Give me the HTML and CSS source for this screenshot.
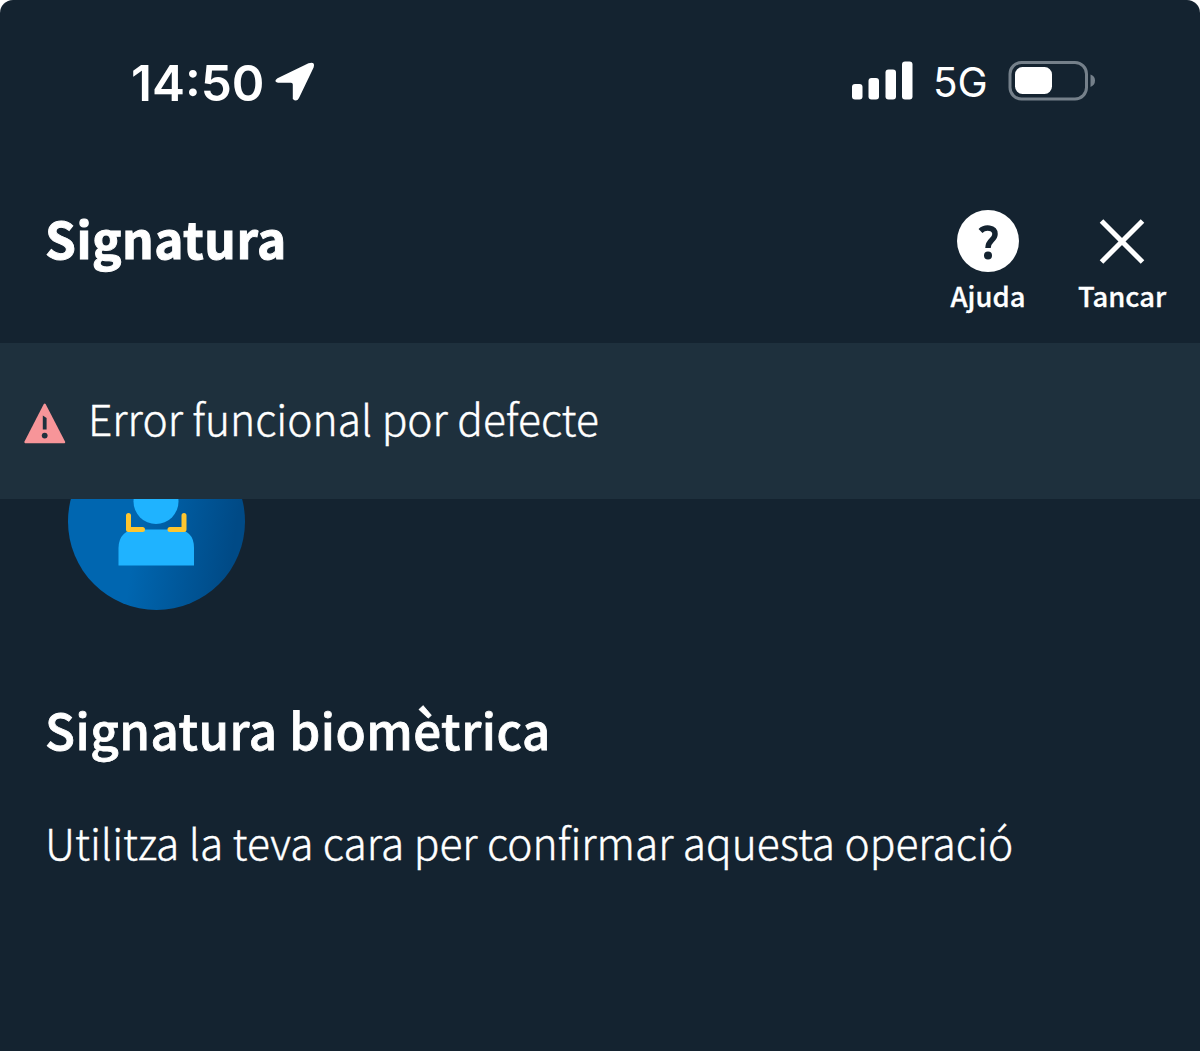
FILE: index.html
```html
<!DOCTYPE html>
<html lang="ca">
<head>
    <meta charset="UTF-8">
    <meta name="viewport" content="width=device-width, initial-scale=1.0">
    <title>Signatura</title>
    <link rel="stylesheet" href="styles.css">
</head>
<body>

    <div class="screen">
        <div class="status-bar">
            <div class="clock">
                <span class="time">14:50</span>
                <svg class="location" width="40" height="40" viewBox="0 0 40 40">
                    <path d="M2.500 17.200 33.500 2.200Q40.500 0 38.600 6.500L24 37Q21.500 41.500 17.800 38V23.500Q17.800 21.700 16 21.700H3Q-2 20.700 2.500 17.200Z" fill="#fff"/>
                </svg>
            </div>
            <div class="indicators">
                <svg class="signal" width="62" height="40" viewBox="0 0 62 40" fill="#fff">
                    <rect x="1" y="23" width="10.500" height="15.500" rx="3"/>
                    <rect x="17.500" y="17" width="10.500" height="21.500" rx="3"/>
                    <rect x="34.500" y="8.500" width="10.500" height="30" rx="3"/>
                    <rect x="51" y="0.500" width="10.500" height="38" rx="3"/>
                </svg>
                <span class="network">5G</span>
                <svg class="battery" width="88" height="40" viewBox="0 0 88 40">
                    <rect x="2" y="1.500" width="76.500" height="36.500" rx="11.500" fill="none" stroke="#75808a" stroke-width="3"/>
                    <rect x="7" y="6" width="37" height="27" rx="7.500" fill="#fff"/>
                    <path d="M82.500 13.500Q87 15 87 19.500T82.500 26Z" fill="#75808a"/>
                </svg>
            </div>
        </div>

        <header class="header">
            <h1>Signatura</h1>
            <div class="actions">
                <div class="action">
                    <svg width="62" height="62" viewBox="0 0 62 62">
                        <circle cx="31" cy="31" r="31" fill="#fff"/>
                        <path d="M23.500 21C28 16.500 38 17 38 24C38 30.500 31 29.500 31 38" fill="none" stroke="#142330" stroke-width="5.500"/>
                        <circle cx="31" cy="45.500" r="4" fill="#142330"/>
                    </svg>
                    <span class="label">Ajuda</span>
                </div>
                <div class="action">
                    <svg width="62" height="62" viewBox="0 0 62 62">
                        <path d="M10.500 11 51.500 52M51.500 11 10.500 52" stroke="#fff" stroke-width="5"/>
                    </svg>
                    <span class="label">Tancar</span>
                </div>
            </div>
        </header>

        <div class="alert">
            <svg class="warning" width="42" height="41" viewBox="0 0 42 41">
                <path d="M19.800 1Q20.700 0 21.600 1L41 38.500Q41.600 40 40.500 40.200H1.200Q0 40 .5 38.500Z" fill="#f79599"/>
                <path d="M18.800 12.500 22.600 15V26.500H18.800Z" fill="#1e303d"/>
                <circle cx="20.700" cy="32.600" r="2.900" fill="#1e303d"/>
            </svg>
            <span class="alert-text">Error funcional por defecte</span>
        </div>

        <main class="content">
            <svg class="face" width="178" height="111" viewBox="0 66 178 111">
                <defs>
                    <linearGradient id="badge" x1="0" y1="0.400" x2="1" y2="0.550">
                        <stop offset="0.400" stop-color="#0066b0"/>
                        <stop offset="0.950" stop-color="#004a86"/>
                    </linearGradient>
                </defs>
                <circle cx="88.500" cy="88.500" r="88.500" fill="url(#badge)"/>
                <circle cx="88" cy="68.500" r="22.500" fill="#1fb3ff"/>
                <path d="M50.500 132.500V115Q51 96.500 70 96.500H107Q126 96.500 126 115V132.500Z" fill="#1fb3ff"/>
                <path d="M60.500 82.500V96.500H74.500M116 82.500V96.500H102" fill="none" stroke="#fdc62f" stroke-width="5" stroke-linecap="round" stroke-linejoin="round"/>
            </svg>
            <h2>Signatura biomètrica</h2>
            <p>Utilitza la teva cara per confirmar aquesta operació</p>
        </main>
    </div>

</body>
</html>
```
FILE: styles.css
```css
body {
    margin: 0;
    background-color: #fff;
    color: #fff;
    font-family: "Noto Sans CJK JP", "Open Sans", sans-serif;
}
.screen {
    height: 1051px;
    background-color: #142330;
    border-radius: 13px 13px 0 0;
    overflow: hidden;
    white-space: nowrap;
}
.status-bar {
    display: flex;
    justify-content: space-between;
    box-sizing: border-box;
    height: 163px;
    padding: 61px 104px 0 131px;
    font-family: Inter, sans-serif;
}
.clock,
.indicators {
    display: flex;
    align-items: center;
    height: 40px;
}
.time {
    width: 144px;
    padding-top: 3px;
    font-size: 49.5px;
    font-weight: 600;
    line-height: 40px;
}
.network {
    width: 75px;
    margin-left: 20px;
    padding-top: 4px;
    font-size: 40.5px;
    line-height: 40px;
}
.header {
    display: flex;
    justify-content: space-between;
    box-sizing: border-box;
    height: 180px;
    padding: 47px 34px 0 45px;
}
h1,
h2,
p {
    margin: 0;
}
h1 {
    font-size: 49.5px;
    font-weight: 700;
    line-height: 56px;
    letter-spacing: 0.5px;
    -webkit-text-stroke: 1px #fff;
}
.actions {
    display: flex;
    gap: 46px;
}
.action {
    display: flex;
    flex-direction: column;
    align-items: center;
    width: 88px;
}
.label {
    margin-top: 7px;
    font-size: 27.4px;
    font-weight: 500;
    line-height: 33px;
    -webkit-text-stroke: 0.3px #fff;
}
.alert {
    display: flex;
    align-items: center;
    box-sizing: border-box;
    height: 156px;
    padding-left: 24px;
    gap: 22px;
    background-color: #1e303d;
}
.warning {
    margin-top: 5px;
}
.alert-text {
    padding-bottom: 8px;
    font-size: 42.5px;
    font-weight: 300;
    -webkit-text-stroke: 0.4px #fff;
}
.content {
    padding: 0 45px;
}
.face {
    display: block;
    margin-left: 23px;
}
h2 {
    margin-top: 87px;
    font-size: 49.3px;
    font-weight: 500;
    line-height: 64px;
    letter-spacing: 0.5px;
    -webkit-text-stroke: 0.8px #fff;
}
p {
    margin-top: 51px;
    font-size: 42.5px;
    font-weight: 300;
    line-height: 60px;
    -webkit-text-stroke: 0.4px #fff;
}
```
